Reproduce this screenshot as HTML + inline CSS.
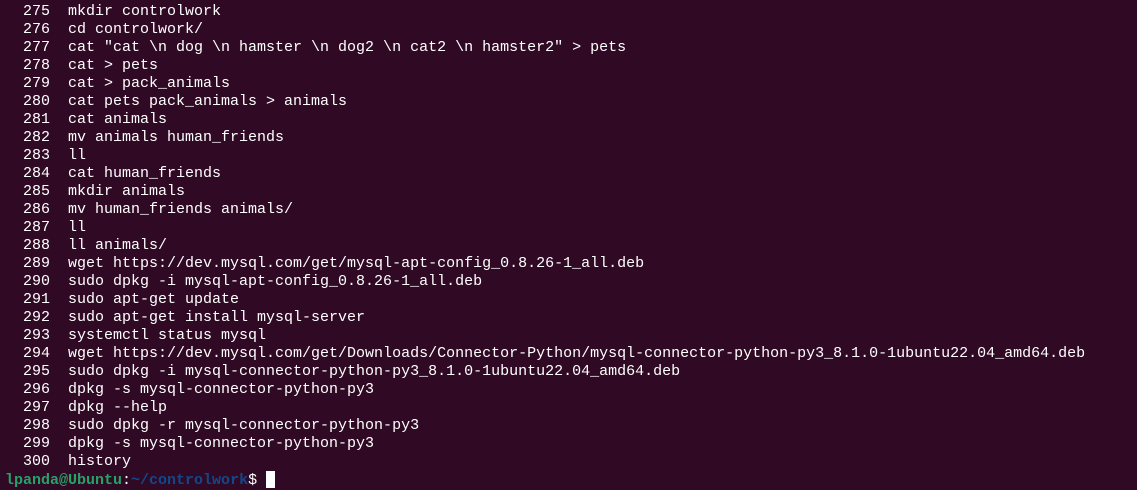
<!DOCTYPE html>
<html><head><meta charset="utf-8"><style>
html,body{margin:0;padding:0;background:#300a24;width:1137px;height:490px;overflow:hidden}
pre{margin:0;position:absolute;left:5px;top:3px;font-family:"Liberation Mono",monospace;font-size:15px;line-height:18px;color:#ffffff}
.g{color:#26a269;font-weight:bold}.b{color:#12488b;font-weight:bold}
.c{display:inline-block;width:9px;height:17px;background:#fff;vertical-align:-4px}
</style></head><body><pre>  275  mkdir controlwork
  276  cd controlwork/
  277  cat "cat \n dog \n hamster \n dog2 \n cat2 \n hamster2" &gt; pets
  278  cat &gt; pets
  279  cat &gt; pack_animals
  280  cat pets pack_animals &gt; animals
  281  cat animals
  282  mv animals human_friends
  283  ll
  284  cat human_friends
  285  mkdir animals
  286  mv human_friends animals/
  287  ll
  288  ll animals/
  289  wget https://dev.mysql.com/get/mysql-apt-config_0.8.26-1_all.deb
  290  sudo dpkg -i mysql-apt-config_0.8.26-1_all.deb
  291  sudo apt-get update
  292  sudo apt-get install mysql-server
  293  systemctl status mysql
  294  wget https://dev.mysql.com/get/Downloads/Connector-Python/mysql-connector-python-py3_8.1.0-1ubuntu22.04_amd64.deb
  295  sudo dpkg -i mysql-connector-python-py3_8.1.0-1ubuntu22.04_amd64.deb
  296  dpkg -s mysql-connector-python-py3
  297  dpkg --help
  298  sudo dpkg -r mysql-connector-python-py3
  299  dpkg -s mysql-connector-python-py3
  300  history
<span class="g">lpanda@Ubuntu</span>:<span class="b">~/controlwork</span>$ <span class="c"></span></pre></body></html>
